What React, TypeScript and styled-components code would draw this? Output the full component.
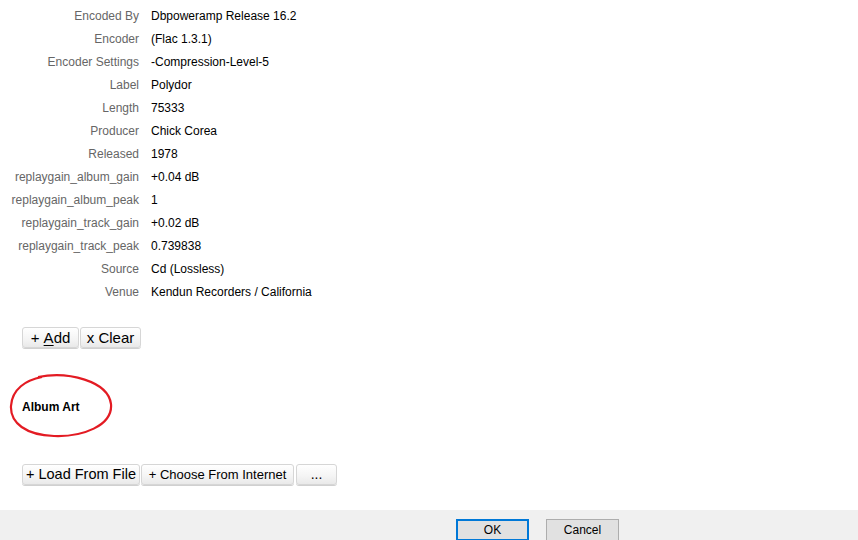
import React from 'react';
import styled, { createGlobalStyle } from 'styled-components';

const GlobalStyle = createGlobalStyle`
  html, body {
    margin: 0;
    padding: 0;
    background: #fff;
    overflow: hidden;
  }
  body {
    font-family: 'Liberation Sans', Arial, sans-serif;
  }
`;

const Dialog = styled.div`
  width: 858px;
  height: 540px;
  display: flex;
  flex-direction: column;
  background: #fff;
`;

const Body = styled.div`
  flex: 1;
  display: flex;
  flex-direction: column;
  padding-top: 4px;
`;

const TagTable = styled.div`
  display: grid;
  grid-template-columns: 139px 1fr;
  column-gap: 12px;
  grid-auto-rows: 23px;
  align-items: center;
  font-size: 12px;
`;

const TagName = styled.div`
  color: #666;
  text-align: right;
  white-space: nowrap;
`;

const TagValue = styled.div`
  color: #000;
  white-space: nowrap;
`;

const ButtonRow = styled.div<{ $top: number }>`
  display: flex;
  align-items: center;
  padding-left: 22px;
  margin-top: ${(p) => p.$top}px;
`;

const SoftButton = styled.button<{ $width: number; $size: number; $gapAfter?: number }>`
  width: ${(p) => p.$width}px;
  height: 21px;
  margin-right: ${(p) => p.$gapAfter ?? 1}px;
  padding: 0 0 1px;
  border: 1px solid #d6d6d6;
  border-radius: 3px;
  background: linear-gradient(#ffffff, #f4f4f4 60%, #e9e9e9);
  box-shadow: 0 1px 0 #d0d0d0;
  font-family: 'Liberation Sans', Arial, sans-serif;
  font-size: ${(p) => p.$size}px;
  color: #000;
  display: flex;
  align-items: center;
  justify-content: center;
  white-space: nowrap;
  cursor: pointer;

  u {
    text-decoration: underline;
    text-underline-offset: 2px;
  }
`;

const Section = styled.div`
  position: relative;
  margin-top: 47px;
  padding-left: 22px;
  height: 24px;
  display: flex;
  align-items: center;
`;

const SectionTitle = styled.div`
  font-size: 12px;
  font-weight: bold;
  color: #000;
`;

// hand-drawn red ring around the section heading
const Ring = styled.svg`
  position: absolute;
  left: 8px;
  top: -22px;
  pointer-events: none;
`;

const Footer = styled.div`
  height: 30px;
  background: #f0f0f0;
  display: flex;
  align-items: flex-start;
  padding-top: 9px;
  padding-left: 456px;
  gap: 17px;
  box-sizing: border-box;
`;

const DialogButton = styled.button<{ $default?: boolean }>`
  width: 73px;
  height: 22px;
  box-sizing: border-box;
  background: #e1e1e1;
  border: ${(p) => (p.$default ? '2px solid #0078d7' : '1px solid #adadad')};
  font-family: 'Liberation Sans', Arial, sans-serif;
  font-size: 12px;
  color: #000;
  padding: 0;
  display: flex;
  align-items: center;
  justify-content: center;
`;

const tags: [string, string][] = [
  ['Encoded By', 'Dbpoweramp Release 16.2'],
  ['Encoder', '(Flac 1.3.1)'],
  ['Encoder Settings', '-Compression-Level-5'],
  ['Label', 'Polydor'],
  ['Length', '75333'],
  ['Producer', 'Chick Corea'],
  ['Released', '1978'],
  ['replaygain_album_gain', '+0.04 dB'],
  ['replaygain_album_peak', '1'],
  ['replaygain_track_gain', '+0.02 dB'],
  ['replaygain_track_peak', '0.739838'],
  ['Source', 'Cd (Lossless)'],
  ['Venue', 'Kendun Recorders / California'],
];

export default function App() {
  return (
    <>
      <GlobalStyle />
      <Dialog>
        <Body>
          <TagTable>
            {tags.map(([name, value]) => (
              <React.Fragment key={name}>
                <TagName>{name}</TagName>
                <TagValue>{value}</TagValue>
              </React.Fragment>
            ))}
          </TagTable>

          <ButtonRow $top={24}>
            <SoftButton $width={57} $size={15} $gapAfter={1}>
              +&nbsp;<u>A</u>dd
            </SoftButton>
            <SoftButton $width={61} $size={15}>
              x Clear
            </SoftButton>
          </ButtonRow>

          <Section>
            <SectionTitle>Album Art</SectionTitle>
            <Ring width="106" height="66" viewBox="0 0 106 66">
              <path
                d="M30 4 C60 -2 100 8 103 31 C105 53 74 64 46 63 C18 62 2 50 3 33 C4 16 18 7 34 4"
                fill="none"
                stroke="#e31b23"
                strokeWidth="2.2"
              />
            </Ring>
          </Section>

          <ButtonRow $top={45}>
            <SoftButton $width={118} $size={14.5} $gapAfter={1}>
              +&nbsp;Load From File
            </SoftButton>
            <SoftButton $width={153} $size={13} $gapAfter={2}>
              +&nbsp;Choose From Internet
            </SoftButton>
            <SoftButton $width={41} $size={14}>
              ...
            </SoftButton>
          </ButtonRow>
        </Body>

        <Footer>
          <DialogButton $default>OK</DialogButton>
          <DialogButton>Cancel</DialogButton>
        </Footer>
      </Dialog>
    </>
  );
}
